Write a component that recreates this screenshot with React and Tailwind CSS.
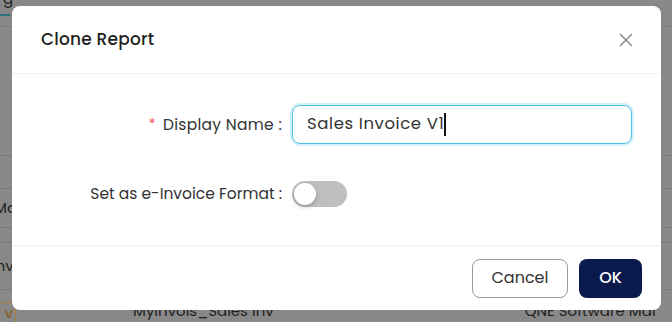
import React from "react";

const font = { fontFamily: "Poppins, Inter, 'Noto Sans', sans-serif" };

export default function App() {
  return (
    <div
      className="relative w-[672px] h-[322px] overflow-hidden bg-[#888888]"
      style={font}
    >
      {/* background page under overlay */}
      <div className="flex flex-col w-full text-[#1e1e1e]">
        <div className="h-[14px] relative">
          <span className="absolute left-[3px] top-[-12px] text-[15px]">g</span>
        </div>
        <div className="h-[2px] w-[10px] bg-[#2f6f7a]" />
        <div className="h-[11px] border-b border-[#7a7a7a]" />
        <div className="h-[129px] border-b border-[#7a7a7a]" />
        <div className="h-[33px] border-b border-[#7a7a7a]" />
        <div className="h-[39px] border-b border-[#7a7a7a] flex items-center text-[15px] pl-[0px]">
          <span className="ml-[-6px]">Mo</span>
        </div>
        <div className="h-[15px] border-b border-[#7a7a7a]" />
        <div className="h-[47px] border-b border-[#7a7a7a] flex items-center text-[15px]">
          <span className="ml-[-8px]">Inv</span>
        </div>
        <div className="h-[12px]" />
        <div className="h-[24px] flex items-start text-[15px]">
          <span className="w-[28px] h-[22px] ml-[-12px] border border-[#a87a3a] text-[#8a5a1a] flex items-center justify-end pr-[2px]">
            v
          </span>
          <span className="ml-[117px] mt-[-2px]">MyInvois_Sales Inv</span>
          <span className="ml-[251px] mt-[-2px]">QNE Software Mal</span>
        </div>
      </div>

      {/* modal */}
      <div className="absolute left-[12px] top-[6px] w-[649px] h-[304px] bg-white rounded-[8px] flex flex-col">
        <div className="h-[68px] flex items-center justify-between pl-[29px] pr-[27px] border-b border-[#f0f0f0]">
          <span className="text-[17px] tracking-[0.2px] text-[#1f1f1f] font-medium">Clone Report</span>
          <svg width="16" height="16" viewBox="0 0 16 16" className="text-[#8c8c8c]">
            <path d="M2 2 L14 14 M14 2 L2 14" stroke="currentColor" strokeWidth="1.5" />
          </svg>
        </div>

        <div className="flex-1 flex flex-col pt-[31px] pr-[29px]">
          <div className="flex items-center">
            <div className="w-[270px] flex justify-end items-center text-[15.5px] tracking-[0.3px] text-[#333]">
              <span className="text-[#ff4d4f] mr-[7px] text-[14px]">*</span>
              <span>Display Name :</span>
            </div>
            <div className="ml-[10px] flex-1 h-[39px] rounded-[8px] border border-[#4fc0e6] shadow-[0_0_0_2px_rgba(79,192,230,0.25)] flex items-center pl-[14px] text-[16.5px] tracking-[0.6px] text-[#333]">
              <span>Sales Invoice V1</span>
              <span className="w-[2px] h-[23px] bg-[#111] ml-[0px]" />
            </div>
          </div>

          <div className="flex items-center mt-[37px]">
            <div className="w-[270px] flex justify-end items-center text-[15.5px] text-[#333]">
              <span>Set as e-Invoice Format :</span>
            </div>
            <div className="ml-[10px] w-[55px] h-[26px] rounded-full bg-[#bfbfbf] p-[2px] flex items-center">
              <div className="w-[22px] h-[22px] rounded-full bg-white shadow-[0_2px_4px_rgba(0,35,11,0.25)]" />
            </div>
          </div>
        </div>

        <div className="h-[65px] border-t border-[#f0f0f0] flex items-center justify-end gap-[11px] pr-[19px]">
          <button className="w-[96px] h-[39px] rounded-[8px] border border-[#9a9a9a] bg-white text-[16px] text-[#333]">
            Cancel
          </button>
          <button className="w-[63px] h-[39px] rounded-[8px] bg-[#0a1a4d] text-white text-[16px] font-medium">
            OK
          </button>
        </div>
      </div>
    </div>
  );
}
